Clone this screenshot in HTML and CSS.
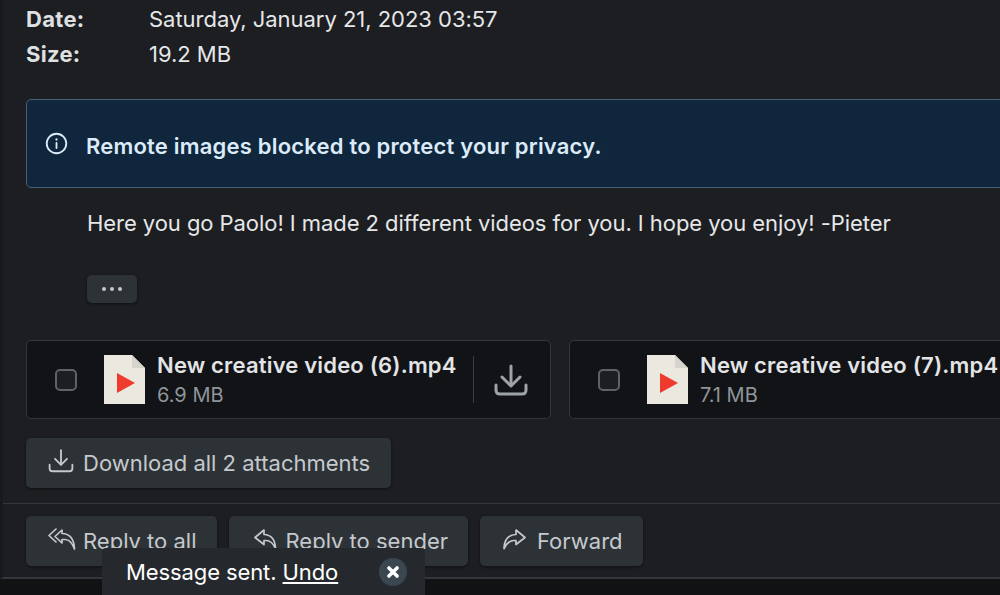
FILE: index.html
```html
<!DOCTYPE html>
<html lang="en">
<head>
    <meta charset="UTF-8">
    <meta name="viewport" content="width=device-width, initial-scale=1.0">
    <title>Message</title>
    <link rel="stylesheet" href="styles.css">
</head>
<body>

    <div class="message">
        <div class="meta">
            <div class="meta-row"><span class="meta-label">Date:</span><span>Saturday, January 21, 2023 03:57</span></div>
            <div class="meta-row"><span class="meta-label">Size:</span><span>19.2 MB</span></div>
        </div>

        <div class="alert">
            <svg class="alert-icon" viewBox="0 0 24 24" fill="none" stroke="currentColor" stroke-width="1.9" stroke-linecap="round">
                <circle cx="12" cy="12" r="10.2"/>
                <path d="M12 11.5v5.2"/>
                <path d="M12 7.6v.2" stroke-width="2.4"/>
            </svg>
            <span class="alert-text">Remote images blocked to protect your privacy.</span>
        </div>

        <div class="body-text">
            <p>Here you go Paolo! I made 2 different videos for you. I hope you enjoy! -Pieter</p>
            <button class="more-btn"><i></i><i></i><i></i></button>
        </div>

        <div class="attachments">
            <div class="attachment">
                <span class="check"></span>
                <svg class="file-icon" viewBox="0 0 41 49">
                    <path d="M0 0H28L41 13V49H0Z" fill="#ebe8e0"/>
                    <path d="M28 0L41 13H28Z" fill="#d6d4cc"/>
                    <path d="M13 18L31 28L13 38Z" fill="#ef3b2d"/>
                </svg>
                <div class="file-info">
                    <div class="file-name">New creative video (6).mp4</div>
                    <div class="file-size">6.9 MB</div>
                </div>
                <div class="file-action">
                    <svg class="save-icon" viewBox="0 0 34 32" fill="none" stroke="currentColor" stroke-width="3" stroke-linecap="round" stroke-linejoin="round">
                        <path d="M17 2V21"/>
                        <path d="M8 13L17 22L26 13"/>
                        <path d="M2 21V26Q2 30 6 30H28Q32 30 32 26V21"/>
                    </svg>
                </div>
            </div>
            <div class="attachment">
                <span class="check"></span>
                <svg class="file-icon" viewBox="0 0 41 49">
                    <path d="M0 0H28L41 13V49H0Z" fill="#ebe8e0"/>
                    <path d="M28 0L41 13H28Z" fill="#d6d4cc"/>
                    <path d="M13 18L31 28L13 38Z" fill="#ef3b2d"/>
                </svg>
                <div class="file-info">
                    <div class="file-name">New creative video (7).mp4</div>
                    <div class="file-size">7.1 MB</div>
                </div>
            </div>
        </div>

        <button class="btn download-all">
            <svg class="btn-icon" viewBox="0 0 24 24" fill="none" stroke="currentColor" stroke-width="1.7" stroke-linecap="round" stroke-linejoin="round">
                <path d="M12 2V15"/>
                <path d="M6.5 10L12 15.5L17.5 10"/>
                <path d="M1.5 15.5V19Q1.5 21.5 4 21.5H20Q22.5 21.5 22.5 19V15.5"/>
            </svg>
            Download all 2 attachments
        </button>

        <div class="actions">
            <button class="btn reply-all">
                <svg class="btn-icon" viewBox="0 0 28 24" fill="none" stroke="currentColor" stroke-width="1.7" stroke-linecap="round" stroke-linejoin="round">
                    <path d="M8 2L1 8.5L8 15"/>
                    <path d="M14 3L7 9.5L14 16V12.5H17Q23 12.5 26.5 22Q26 7 14 6.5Z"/>
                </svg>
                Reply to all
            </button>
            <button class="btn reply-sender">
                <svg class="btn-icon" viewBox="0 0 24 24" fill="none" stroke="currentColor" stroke-width="1.7" stroke-linecap="round" stroke-linejoin="round">
                    <path d="M11 3L2 10.5L11 17.5V13.5H13Q19 13.5 22.5 21.5Q22 8 11 7.5Z"/>
                </svg>
                Reply to sender
            </button>
            <button class="btn forward">
                <svg class="btn-icon" viewBox="0 0 24 24" fill="none" stroke="currentColor" stroke-width="1.7" stroke-linecap="round" stroke-linejoin="round">
                    <path d="M14 3L23 10.5L14 17.5V13.5H12Q6 13.5 2 21.5Q2.5 8 14 7.5Z"/>
                </svg>
                Forward
            </button>
        </div>
    </div>

    <div class="footer-strip"></div>

    <div class="toast">
        <span class="toast-text">Message sent. <a href="#">Undo</a></span>
        <span class="toast-close">
            <svg viewBox="0 0 12 12" fill="none" stroke="currentColor" stroke-width="3" stroke-linecap="round"><path d="M2.5 2.5L9.5 9.5M9.5 2.5L2.5 9.5"/></svg>
        </span>
    </div>

</body>
</html>
```
FILE: styles.css
```css
html, body { height: 100%; }
body { margin: 0; background: #1c1e21; color: #e6e7e9; font-family: Inter, "Noto Sans", sans-serif; font-size: 22px; overflow: hidden; position: relative; }
button { font-family: inherit; }

.message { border-left: 3px solid #18191c; border-bottom: 2px solid #33373b; height: 579px; box-sizing: border-box; overflow: hidden; }

.meta { padding: 1px 0 0 23px; }
.meta-row { display: flex; height: 35px; align-items: center; letter-spacing: -0.03px; }
.meta-label { width: 123px; font-weight: 700; color: #dfe0e2; letter-spacing: 0.3px; }

.alert { display: flex; align-items: center; gap: 18px; box-sizing: border-box; width: 1100px; height: 89px; margin: 28px 0 0 23px; padding-left: 18px; background: #10263d; border: 1px solid #4a6076; border-radius: 5px; color: #dcebf8; }
.alert-icon { width: 23px; height: 23px; flex: none; }
.alert-text { padding-top: 4px; font-weight: 600; letter-spacing: 0.2px; }

.body-text { padding: 0 0 0 84px; }
.body-text p { margin: 0; height: 87px; padding-top: 23px; box-sizing: border-box; line-height: 25px; letter-spacing: -0.06px; }
.more-btn { display: flex; align-items: center; justify-content: center; gap: 4px; width: 50px; height: 28px; padding: 0; background: #2d3237; border: 0; border-radius: 5px; box-shadow: 0 1px 3px rgba(0,0,0,0.5); }
.more-btn i { width: 4px; height: 4px; border-radius: 50%; background: #c5c9cd; }

.attachments { display: flex; gap: 18px; margin: 37px 0 0 23px; width: 1100px; }
.attachment { display: flex; align-items: center; box-sizing: border-box; width: 525px; height: 79px; flex: none; background: #111316; border: 1px solid #33373b; border-radius: 5px; }
.check { width: 22px; height: 22px; flex: none; box-sizing: border-box; margin-left: 28px; background: #1c1e21; border: 2px solid #5d6268; border-radius: 5px; }
.file-icon { width: 41px; height: 49px; flex: none; margin-left: 27px; }
.file-info { margin-left: 12px; width: 316px; flex: none; }
.file-name { font-weight: 600; color: #e3e4e6; line-height: 30px; white-space: nowrap; letter-spacing: 0.18px; }
.file-size { font-size: 20px; color: #8f9499; line-height: 30px; }
.file-action { display: flex; align-items: center; height: 47px; padding-left: 20px; border-left: 1px solid #3a3e42; color: #9ea3a8; }
.save-icon { width: 34px; height: 32px; }

.btn { display: inline-flex; align-items: center; gap: 11px; height: 50px; padding: 0 20px 0 22px; background: #2d3237; border: 0; border-radius: 5px; box-shadow: 0 1px 3px rgba(0,0,0,0.5); color: #c5c9cd; font-size: 22px; white-space: nowrap; }
.btn-icon { width: 24px; height: 24px; flex: none; margin-bottom: 4px; }
.download-all { gap: 9px; margin: 19px 0 0 23px; padding-right: 21px; }
.download-all .btn-icon { width: 26px; height: 26px; }
.reply-all { gap: 7px; }
.reply-all .btn-icon { width: 28px; }
.reply-sender { gap: 9px; padding-left: 24px; }

.actions { display: flex; gap: 12px; margin-top: 15px; padding: 12px 0 0 23px; border-top: 1px solid #33373b; }

.footer-strip { height: 16px; background: #111214; }

.toast { position: absolute; left: 102px; bottom: 0; display: flex; align-items: center; gap: 41px; box-sizing: border-box; width: 323px; height: 47px; padding-left: 24px; background: #25292d; border-radius: 4px 4px 0 0; color: #fff; }
.toast-text { letter-spacing: -0.1px; }
.toast a { color: #fff; }
.toast-close { display: flex; align-items: center; justify-content: center; width: 28px; height: 28px; border-radius: 50%; background: #3a4650; color: #fff; }
.toast-close svg { width: 14px; height: 14px; }
```
